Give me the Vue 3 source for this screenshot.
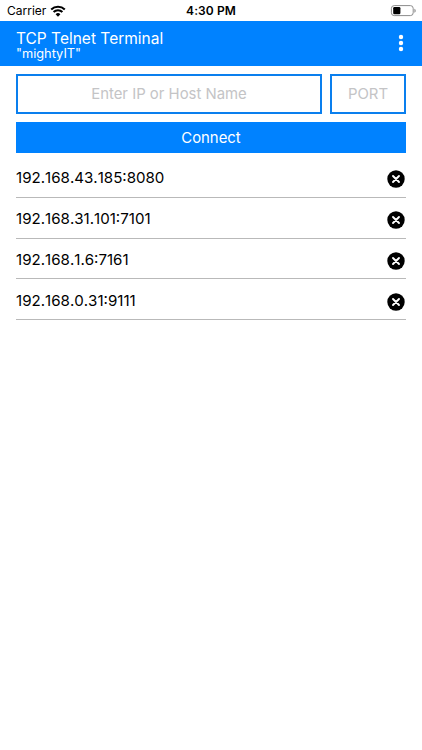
<template>
  <div class="screen">
    <div class="status-bar">
      <div class="carrier">
        <span>Carrier</span>
        <svg class="wifi" viewBox="0 0 16 12" aria-hidden="true">
          <path d="M1.2 4.6a9.7 9.7 0 0 1 13.6 0" />
          <path d="M3.6 7.1a6.2 6.2 0 0 1 8.8 0" />
          <path class="dot" d="M8 11.8 5.6 9.3a3.4 3.4 0 0 1 4.8 0z" />
        </svg>
      </div>
      <div class="time">4:30 PM</div>
      <svg class="battery" viewBox="0 0 26 12" aria-hidden="true">
        <rect x="1.4" y="0.6" width="21.8" height="10" rx="2.8" fill="none" stroke="#8c8c8c" />
        <rect x="3.2" y="2" width="7.2" height="7.2" rx="1.2" />
        <path d="M24.4 3.8v4c.8-.3 1.3-1.1 1.3-2s-.5-1.7-1.3-2z" fill="#8c8c8c" />
      </svg>
    </div>

    <header class="header">
      <div>
        <div class="title">TCP Telnet Terminal</div>
        <div class="subtitle">"mightyIT"</div>
      </div>
      <button class="menu" aria-label="Menu">
        <svg viewBox="0 0 6 18">
          <circle cx="3" cy="3" r="2.2" />
          <circle cx="3" cy="9" r="2.2" />
          <circle cx="3" cy="15" r="2.2" />
        </svg>
      </button>
    </header>

    <main class="content">
      <div class="fields">
        <input v-model="host" class="host" type="text" placeholder="Enter IP or Host Name" />
        <input v-model="port" class="port" type="text" placeholder="PORT" />
      </div>
      <button class="connect" @click="connect">Connect</button>

      <ul class="history">
        <li v-for="item in history" :key="item" class="row">
          <span class="address">{{ item }}</span>
          <button class="remove" aria-label="Remove" @click="remove(item)">
            <svg viewBox="0 0 18 18">
              <circle cx="9" cy="9" r="8.7" />
              <path d="m6 6 6 6m0-6-6 6" />
            </svg>
          </button>
        </li>
      </ul>
    </main>
  </div>
</template>

<script setup>
import { ref } from 'vue'

const host = ref('')
const port = ref('')
const history = ref([
  '192.168.43.185:8080',
  '192.168.31.101:7101',
  '192.168.1.6:7161',
  '192.168.0.31:9111',
])

function connect() {
  if (!host.value || !port.value) return
  const address = `${host.value}:${port.value}`
  if (!history.value.includes(address)) history.value.unshift(address)
}

function remove(item) {
  history.value = history.value.filter((x) => x !== item)
}
</script>

<style>
body {
  margin: 0;
  background: #fff;
}
</style>

<style scoped>
.screen {
  box-sizing: border-box;
  height: 750px;
  background: #fff;
  font-family: Inter, 'Liberation Sans', sans-serif;
  color: #000;
  overflow: hidden;
}

button,
input {
  font-family: inherit;
  border: 0;
  border-radius: 0;
  margin: 0;
  padding: 0;
  background: none;
}

svg {
  display: block;
}

.status-bar {
  display: grid;
  grid-template-columns: 1fr auto 1fr;
  align-items: center;
  box-sizing: border-box;
  height: 21px;
  padding: 0 6px 0 7px;
  font-size: 12px;
  line-height: 22px;
}

.carrier {
  display: flex;
  align-items: center;
  gap: 4px;
}

.wifi {
  width: 16px;
  height: 12px;
  fill: none;
  stroke: #000;
  stroke-width: 2.1;
}

.wifi .dot {
  fill: #000;
  stroke: none;
}

.time {
  padding-right: 1px;
  font-weight: 600;
  letter-spacing: 0.1px;
}

.battery {
  width: 26px;
  height: 12px;
  justify-self: end;
}

.header {
  display: flex;
  align-items: center;
  justify-content: space-between;
  box-sizing: border-box;
  height: 44.5px;
  padding: 4px 18px 0 16px;
  background: #0082ff;
  color: #fff;
}

.title {
  font-size: 15.5px;
  line-height: 16px;
}

.subtitle {
  font-size: 12.8px;
  line-height: 13px;
}

.menu {
  padding-bottom: 4px;
}

.menu svg {
  width: 6px;
  height: 18px;
  fill: #fff;
}

.content {
  padding: 8px 16px 0;
}

.fields {
  display: flex;
  gap: 8px;
}

.fields input {
  box-sizing: border-box;
  height: 40.5px;
  border: 2px solid #0a7fee;
  padding-top: 1px;
  font-size: 14.9px;
  text-align: center;
  min-width: 0;
}

.fields input::placeholder {
  color: #c4c4c6;
  opacity: 1;
}

.host {
  flex: 1;
}

.port {
  width: 76px;
}

.connect {
  display: block;
  width: 100%;
  height: 31.5px;
  margin-top: 7.5px;
  padding-top: 1px;
  background: #0082ff;
  color: #fff;
  font-size: 14.9px;
}

.history {
  list-style: none;
  margin: 4px 0 0;
  padding: 0;
}

.row {
  display: flex;
  align-items: center;
  justify-content: space-between;
  box-sizing: border-box;
  height: 40.8px;
  border-bottom: 1px solid #b9b9b9;
}

.address {
  padding-top: 2px;
  font-size: 15.1px;
  font-kerning: none;
}

.remove svg {
  width: 18px;
  height: 18px;
}

.remove {
  padding: 5px 0.7px 0 0;
}

.remove path {
  fill: none;
  stroke: #fff;
  stroke-width: 1.9;
  stroke-linecap: round;
}
</style>
